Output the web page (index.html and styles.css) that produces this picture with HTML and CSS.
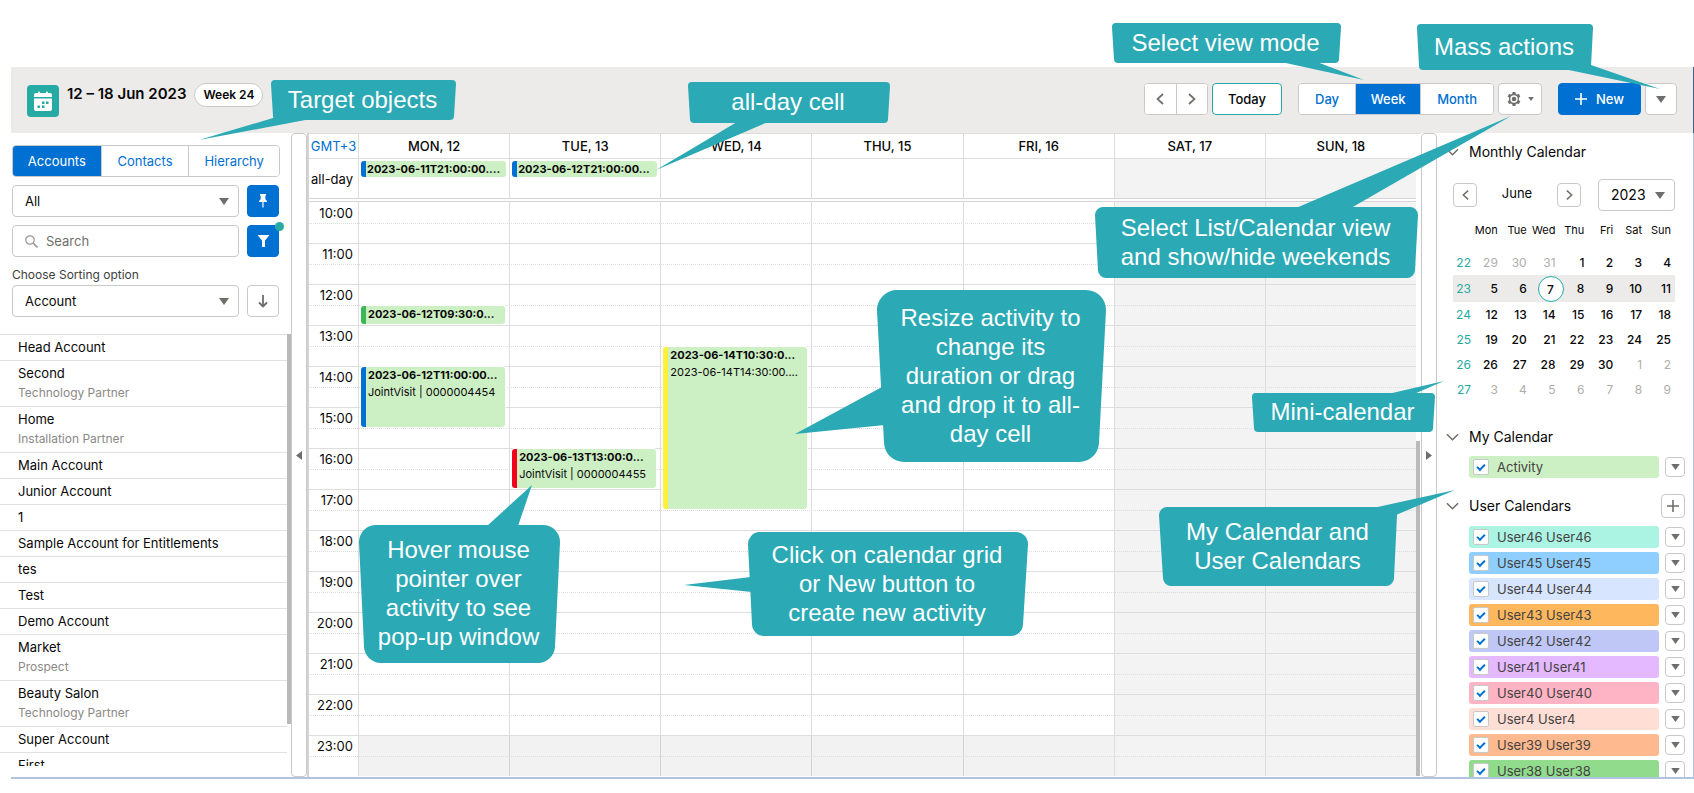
FILE: index.html
```html
<!DOCTYPE html>
<html lang="en">
<head>
<meta charset="utf-8">
<title>Week calendar</title>
<link rel="stylesheet" href="styles.css">
</head>
<body>
<svg class="sprite" aria-hidden="true">
  <symbol id="caret" viewBox="0 0 10 7"><path d="M0 0h10L5 7z"/></symbol>
  <symbol id="chev-left" viewBox="0 0 8 12"><path d="M7 1L1.500 6L7 11" fill="none" stroke="currentColor" stroke-width="1.700"/></symbol>
  <symbol id="chev-right" viewBox="0 0 8 12"><path d="M1 1L6.500 6L1 11" fill="none" stroke="currentColor" stroke-width="1.700"/></symbol>
  <symbol id="chev-down" viewBox="0 0 14 8"><path d="M1 1l6 6 6-6" fill="none" stroke="currentColor" stroke-width="1.600"/></symbol>
  <symbol id="plus" viewBox="0 0 12 12"><path d="M6 0v12M0 6h12" fill="none" stroke="currentColor" stroke-width="1.600"/></symbol>
</svg>
<div class="page">
  <header class="topbar">
    <svg class="app-icon" viewBox="0 0 32 32"><rect width="32" height="32" rx="4" fill="#26aba4"/><path fill="#fff" d="M9 8h2V7.500a1 1 0 0 1 2 0V8h6V7.500a1 1 0 0 1 2 0V8h2a2 2 0 0 1 2 2v2H7v-2a2 2 0 0 1 2-2zM7 13.500h18V24a2 2 0 0 1-2 2H9a2 2 0 0 1-2-2z"/><path fill="#26aba4" d="M15 16.500h2.500V19H15zM19 16.500h2.500V19H19zM10.500 20.500H13V23h-2.500zM15 20.500h2.500V23H15z"/></svg>
    <h1 class="range">12 – 18 Jun 2023</h1>
    <span class="pill">Week 24</span>
    <div class="tools">
      <div class="seg arrows">
        <button type="button" aria-label="Previous"><svg class="chev"><use href="#chev-left"/></svg></button>
        <button type="button" aria-label="Next"><svg class="chev"><use href="#chev-right"/></svg></button>
      </div>
      <button type="button" class="btn today">Today</button>
      <div class="seg views">
        <button type="button">Day</button>
        <button type="button" class="on">Week</button>
        <button type="button">Month</button>
      </div>
      <button type="button" class="btn gear" aria-label="Settings">
        <svg class="gear-icon" viewBox="0 0 14 14"><path fill="#706e6b" fill-rule="evenodd" d="M5.600 0h2.800l.4 1.900 1.200.7L11.900 2l1.400 2.400L11.900 5.700v2.600l1.400 1.300L11.900 12l-1.900-.6-1.200.7L8.400 14H5.600l-.4-1.900-1.200-.7L2.100 12 .7 9.600l1.400-1.300V5.700L.7 4.400 2.100 2l1.900.6 1.200-.7zM7 3.300a3.700 3.700 0 1 0 0 7.400 3.700 3.700 0 0 0 0-7.400zM7 4.700a2.300 2.300 0 1 1 0 4.600 2.300 2.300 0 0 1 0-4.600z"/></svg>
        <svg class="caret-small"><use href="#caret"/></svg>
      </button>
      <button type="button" class="btn new"><svg class="plus"><use href="#plus"/></svg>New</button>
      <button type="button" class="btn more" aria-label="Mass actions"><svg class="caret"><use href="#caret"/></svg></button>
    </div>
  </header>

  <main class="main">
    <aside class="side">
      <div class="filters">
        <div class="seg tabs">
          <button type="button" class="on">Accounts</button>
          <button type="button">Contacts</button>
          <button type="button">Hierarchy</button>
        </div>
        <div class="row">
          <div class="select"><select aria-label="List view"><option>All</option></select><svg class="caret"><use href="#caret"/></svg></div>
          <button type="button" class="sq blue" aria-label="Pin"><svg class="pin" viewBox="0 0 8 14"><path fill="#fff" d="M1 0h6v1.500l-.8.5.3 3.500L8 7v1H4.600v5L4 14l-.6-1V8H0V7l1.500-1.500L1.800 2 1 1.500z"/></svg></button>
        </div>
        <div class="row">
          <div class="search"><svg viewBox="0 0 13 13"><circle cx="5" cy="5" r="4.200" fill="none" stroke="#999" stroke-width="1.300"/><path d="M8 8l4.500 4.500" stroke="#999" stroke-width="1.600"/></svg><input type="text" placeholder="Search" aria-label="Search"></div>
          <button type="button" class="sq blue" aria-label="Filter"><svg class="funnel" viewBox="0 0 13 12"><path fill="#fff" d="M.5 0h12L8 5.500V12H5V5.500z"/></svg><i class="dot"></i></button>
        </div>
        <label class="sort-label" for="sort">Choose Sorting option</label>
        <div class="row sort-row">
          <div class="select"><select id="sort"><option>Account</option></select><svg class="caret"><use href="#caret"/></svg></div>
          <button type="button" class="sq" aria-label="Sort direction"><svg class="down" viewBox="0 0 10 13"><path d="M5 0v11.500M1 7.500l4 4 4-4" fill="none" stroke="#706e6b" stroke-width="1.800"/></svg></button>
        </div>
      </div>
      <ul class="accounts">
        <li>Head Account</li>
        <li>Second<small>Technology Partner</small></li>
        <li>Home<small>Installation Partner</small></li>
        <li>Main Account</li>
        <li>Junior Account</li>
        <li>1</li>
        <li>Sample Account for Entitlements</li>
        <li>tes</li>
        <li>Test</li>
        <li>Demo Account</li>
        <li>Market<small>Prospect</small></li>
        <li>Beauty Salon<small>Technology Partner</small></li>
        <li>Super Account</li>
        <li>First</li>
      </ul>
    </aside>

    <button type="button" class="gutter" aria-label="Collapse left panel"><svg viewBox="0 0 6 9"><path d="M6 0v9L0 4.500z" fill="#706e6b"/></svg></button>

    <section class="calendar">
      <div class="week head">
        <div class="gmt">GMT+3</div><div>MON, 12</div><div>TUE, 13</div><div>WED, 14</div><div>THU, 15</div><div>FRI, 16</div><div>SAT, 17</div><div>SUN, 18</div>
      </div>
      <div class="week allday">
        <div class="label">all-day</div>
        <div><div class="event blue-bar">2023-06-11T21:00:00....</div></div>
        <div><div class="event blue-bar">2023-06-12T21:00:00...</div></div>
        <div></div><div></div><div></div><div class="off"></div><div class="off"></div>
      </div>
      <div class="week hours">
        <div class="day mon"></div><div class="day tue"></div><div class="day wed"></div><div class="day thu"></div><div class="day fri"></div><div class="day sat off"></div><div class="day sun off"></div>
        <div class="hours-list">
          <div class="hour"><span>10:00</span></div><div class="hour"><span>11:00</span></div><div class="hour"><span>12:00</span></div><div class="hour"><span>13:00</span></div><div class="hour"><span>14:00</span></div><div class="hour"><span>15:00</span></div><div class="hour"><span>16:00</span></div><div class="hour"><span>17:00</span></div><div class="hour"><span>18:00</span></div><div class="hour"><span>19:00</span></div><div class="hour"><span>20:00</span></div><div class="hour"><span>21:00</span></div><div class="hour"><span>22:00</span></div><div class="hour closed"><span>23:00</span></div>
        </div>
        <div class="event green-bar mon at-1230"><b>2023-06-12T09:30:0...</b></div>
        <div class="event blue-bar mon at-1400"><b>2023-06-12T11:00:00...</b>JointVisit | 0000004454</div>
        <div class="event red-bar tue at-1600"><b>2023-06-13T13:00:0...</b>JointVisit | 0000004455</div>
        <div class="event yellow-bar wed at-1330"><b>2023-06-14T10:30:0...</b>2023-06-14T14:30:00....</div>
      </div>
      <i class="thumb"></i>
    </section>

    <button type="button" class="gutter" aria-label="Collapse right panel"><svg viewBox="0 0 6 9"><path d="M0 0v9l6-4.500z" fill="#706e6b"/></svg></button>

    <aside class="panel">
      <h2 class="sec"><svg><use href="#chev-down"/></svg>Monthly Calendar</h2>
      <div class="month-nav">
        <button type="button" class="mini" aria-label="Previous month"><svg class="chev"><use href="#chev-left"/></svg></button>
        <span class="month">June</span>
        <button type="button" class="mini" aria-label="Next month"><svg class="chev"><use href="#chev-right"/></svg></button>
        <div class="select year"><select aria-label="Year"><option>2023</option></select><svg class="caret"><use href="#caret"/></svg></div>
      </div>
      <table class="month-grid">
        <thead><tr><th></th><th>Mon</th><th>Tue</th><th>Wed</th><th>Thu</th><th>Fri</th><th>Sat</th><th>Sun</th></tr></thead>
        <tbody>
          <tr><th>22</th><td class="out">29</td><td class="out">30</td><td class="out">31</td><td>1</td><td>2</td><td>3</td><td>4</td></tr>
          <tr class="current"><th>23</th><td>5</td><td>6</td><td><span class="now">7</span></td><td>8</td><td>9</td><td>10</td><td>11</td></tr>
          <tr><th>24</th><td>12</td><td>13</td><td>14</td><td>15</td><td>16</td><td>17</td><td>18</td></tr>
          <tr><th>25</th><td>19</td><td>20</td><td>21</td><td>22</td><td>23</td><td>24</td><td>25</td></tr>
          <tr><th>26</th><td>26</td><td>27</td><td>28</td><td>29</td><td>30</td><td class="out">1</td><td class="out">2</td></tr>
          <tr><th>27</th><td class="out">3</td><td class="out">4</td><td class="out">5</td><td class="out">6</td><td class="out">7</td><td class="out">8</td><td class="out">9</td></tr>
        </tbody>
      </table>
      <h2 class="sec mine"><svg><use href="#chev-down"/></svg>My Calendar</h2>
      <div class="cals">
        <div class="cal"><label class="c-green"><input type="checkbox" checked>Activity</label><button type="button" class="drop" aria-label="Activity menu"><svg><use href="#caret"/></svg></button></div>
      </div>
      <div class="users-head">
        <h2 class="sec"><svg><use href="#chev-down"/></svg>User Calendars</h2>
        <button type="button" class="mini" aria-label="Add calendar"><svg class="plus"><use href="#plus"/></svg></button>
      </div>
      <div class="cals">
        <div class="cal"><label class="c46"><input type="checkbox" checked>User46 User46</label><button type="button" class="drop" aria-label="User46 menu"><svg><use href="#caret"/></svg></button></div>
        <div class="cal"><label class="c45"><input type="checkbox" checked>User45 User45</label><button type="button" class="drop" aria-label="User45 menu"><svg><use href="#caret"/></svg></button></div>
        <div class="cal"><label class="c44"><input type="checkbox" checked>User44 User44</label><button type="button" class="drop" aria-label="User44 menu"><svg><use href="#caret"/></svg></button></div>
        <div class="cal"><label class="c43"><input type="checkbox" checked>User43 User43</label><button type="button" class="drop" aria-label="User43 menu"><svg><use href="#caret"/></svg></button></div>
        <div class="cal"><label class="c42"><input type="checkbox" checked>User42 User42</label><button type="button" class="drop" aria-label="User42 menu"><svg><use href="#caret"/></svg></button></div>
        <div class="cal"><label class="c41"><input type="checkbox" checked>User41 User41</label><button type="button" class="drop" aria-label="User41 menu"><svg><use href="#caret"/></svg></button></div>
        <div class="cal"><label class="c40"><input type="checkbox" checked>User40 User40</label><button type="button" class="drop" aria-label="User40 menu"><svg><use href="#caret"/></svg></button></div>
        <div class="cal"><label class="c4"><input type="checkbox" checked>User4 User4</label><button type="button" class="drop" aria-label="User4 menu"><svg><use href="#caret"/></svg></button></div>
        <div class="cal"><label class="c39"><input type="checkbox" checked>User39 User39</label><button type="button" class="drop" aria-label="User39 menu"><svg><use href="#caret"/></svg></button></div>
        <div class="cal"><label class="c38"><input type="checkbox" checked>User38 User38</label><button type="button" class="drop" aria-label="User38 menu"><svg><use href="#caret"/></svg></button></div>
      </div>
    </aside>
  </main>
</div>

<div class="callout co-target"><svg><path class="body r4" d="M4 4H181L179 36H6z"/><path d="M2 38L-72 60L37 39.500z"/></svg><p>Target objects</p></div>
<div class="callout co-allday"><svg><path class="body r4" d="M4 4H198L196 37H6z"/><path d="M49 40L-32 88L80 40z"/></svg><p>all-day cell</p></div>
<div class="callout co-view"><svg><path class="body r4" d="M4 4H225L223 36H6z"/><path d="M169 39L252 57L205 39z"/></svg><p>Select view mode</p></div>
<div class="callout co-mass"><svg><path class="body r4" d="M4 4H172L170 42H6z"/><path d="M147 45L243 65L174 41z"/></svg><p>Mass actions</p></div>
<div class="callout co-list"><svg><path class="body r8" d="M8 8H315L312 63H11z"/><path d="M201 1L416 -91L256 1z"/></svg><p>Select List/Calendar view<br>and show/hide weekends</p></div>
<div class="callout co-resize"><svg><path class="body r20" d="M20 20H209L202 152H27z"/><path d="M5 97L-82 144L8 135z"/></svg><p>Resize activity to<br>change its<br>duration or drag<br>and drop it to all-<br>day cell</p></div>
<div class="callout co-mini"><svg><path class="body r4" d="M4 4H179L177 35H6z"/><path d="M136 1L192 -12L162 1z"/></svg><p>Mini-calendar</p></div>
<div class="callout co-hover"><svg><path class="body r17" d="M17 17H184L179 121H22z"/><path d="M128 1L173 -40L159 1z"/></svg><p>Hover mouse<br>pointer over<br>activity to see<br>pop-up window</p></div>
<div class="callout co-click"><svg><path class="body r12" d="M12 12H268L263 92H16z"/><path d="M3 45L-64 53L4 60z"/></svg><p>Click on calendar grid<br>or New button to<br>create new activity</p></div>
<div class="callout co-my"><svg><path class="body r8" d="M8 8H230L227 71H12z"/><path d="M214 1L296 -17L237 8z"/></svg><p>My Calendar and<br>User Calendars</p></div>
</body>
</html>
```
FILE: styles.css
```css
* { box-sizing: border-box; }
body {
  margin: 0;
  background: #fff;
  color: #080707;
  font: 13px/20px Inter, "Liberation Sans", sans-serif;
  position: relative;
  overflow: hidden;
}
button, input, select { font: inherit; color: inherit; margin: 0; }
button { background: #fff; border: 1px solid #c9c9c9; padding: 0; cursor: pointer; }
h1, h2, p, ul { margin: 0; padding: 0; }
svg { display: block; }
.sprite { position: absolute; width: 0; height: 0; }

.page { display: flex; flex-direction: column; height: 100vh; padding: 67px 0 14px 11px; }

/* top bar */
.topbar {
  display: flex;
  align-items: flex-start;
  height: 66px;
  flex: none;
  padding: 16px 16px 0;
  background: #ecebea;
  border-right: 1px solid #3b628f;
}
.app-icon { width: 32px; height: 32px; margin-top: 2px; }
.range { margin-left: 8px; font-size: 15px; line-height: 22px; font-weight: 600; white-space: nowrap; }
.pill {
  margin-left: 8px;
  padding: 0 8px;
  border: 1px solid #c9c9c9;
  border-radius: 12px;
  background: #fff;
  font-size: 12px;
  font-weight: 600;
  line-height: 22px;
}
.tools { display: flex; gap: 4px; margin-left: auto; height: 32px; }
.seg { display: flex; border: 1px solid #c9c9c9; border-radius: 4px; overflow: hidden; background: #fff; }
.seg button { border: 0; color: #0070d2; display: flex; align-items: center; justify-content: center; }
.seg button + button { border-left: 1px solid #c9c9c9; }
.seg button.on { background: #0070d2; color: #fff; }
.arrows { width: 64px; }
.arrows button { flex: 1; color: #706e6b; }
.chev { width: 8px; height: 12px; color: #706e6b; }
.btn { border-radius: 4px; display: flex; align-items: center; justify-content: center; }
.today { width: 70px; border-color: #26aba4; margin-right: 12px; font-weight: 500; }
.views { width: 196px; font-weight: 500; }
.views button:nth-child(1) { flex: 57; }
.views button:nth-child(2) { flex: 65; }
.views button:nth-child(3) { flex: 73; }
.gear { width: 44px; margin-right: 12px; gap: 7px; }
.gear-icon { width: 14px; height: 14px; }
.caret { width: 10px; height: 7px; fill: #706e6b; }
.caret-small { width: 6px; height: 4px; fill: #706e6b; }
.new { width: 83px; gap: 9px; background: #0070d2; border-color: #0070d2; color: #fff; font-weight: 500; }
.plus { width: 12px; height: 12px; color: #706e6b; }
.new .plus { color: #fff; }
.more { width: 32px; }

/* columns */
.main {
  flex: 1;
  min-height: 0;
  display: grid;
  grid-template-columns: 280px 16px minmax(0, 1fr) 16px 257px;
  grid-template-rows: minmax(0, 1fr);
  border-bottom: 2px solid #b0c3df;
}
.gutter {
  border-radius: 4px;
  display: flex;
  align-items: center;
  justify-content: center;
}
.gutter svg { width: 6px; height: 9px; }

/* left panel */
.side { display: flex; flex-direction: column; padding-bottom: 11px; }
.filters { padding: 12px 11px 17px 1px; display: flex; flex-direction: column; gap: 8px; }
.tabs { height: 32px; }
.tabs button:nth-child(1) { flex: 89; }
.tabs button:nth-child(2) { flex: 88; }
.tabs button:nth-child(3) { flex: 91; }
.row { display: flex; gap: 8px; height: 32px; padding-right: 1px; }
.select { position: relative; flex: 1; }
.select select {
  appearance: none;
  width: 100%;
  height: 100%;
  padding: 0 12px;
  border: 1px solid #c9c9c9;
  border-radius: 4px;
  background: #fff;
}
.select .caret { position: absolute; right: 10px; top: 13px; pointer-events: none; }
.sq { position: relative; flex: none; width: 32px; border-radius: 4px; display: flex; align-items: center; justify-content: center; }
.sq.blue { background: #0070d2; border-color: #0070d2; }
.pin { width: 8px; height: 14px; }
.funnel { width: 13px; height: 12px; }
.down { width: 10px; height: 13px; }
.dot { position: absolute; right: -6px; top: -4px; width: 9px; height: 9px; border-radius: 50%; background: #26aba4; }
.search { flex: 1; min-width: 0; display: flex; align-items: center; gap: 8px; border: 1px solid #c9c9c9; border-radius: 4px; padding-left: 12px; }
.search svg { width: 13px; height: 13px; flex: none; }
.search input { flex: 1; min-width: 0; border: 0; padding: 0; outline: 0; background: none; }
.search input::placeholder { color: #706e6b; opacity: 1; }
.sort-label { font-size: 12px; color: #3e3e3c; line-height: 20px; }
.sort-row { margin-top: -8px; }
.accounts {
  list-style: none;
  flex: 1;
  min-height: 0;
  overflow: hidden;
  margin: 0 0 0 -11px;
  border-right: 4px solid #bababa;
  border-image: linear-gradient(#bababa 90%, #fff 90%) 1;
  border-image-width: 0 4px 0 0;
}
.accounts li { border-top: 1px solid #e1e1e1; padding-left: 18px; line-height: 25px; }
.accounts small { display: block; font-size: 12px; line-height: 20px; margin-top: -3px; padding-bottom: 3px; color: #8b8987; }

/* week view */
.calendar { position: relative; border-left: 2px solid #d4d4d4; padding-right: 5px; overflow: hidden; display: flex; flex-direction: column; }
.week { display: grid; grid-template-columns: 49px repeat(7, minmax(0, 1fr)); }
.week > div { border-left: 1px solid #dddddd; }
.week > div:first-child { border-left: 0; }
.head { height: 26px; border-top: 1px solid #dddddd; border-bottom: 1px solid #dddddd; margin-right: -5px; padding-right: 5px; line-height: 24px; text-align: center; font-weight: 500; }
.head .gmt { color: #0070d2; font-weight: 400; }
.allday { height: 39px; }
.allday .label { padding-right: 5px; text-align: right; line-height: 40px; }
.off { background: #f3f3f3; }
.event {
  border-left: 5px solid;
  border-radius: 3px;
  background: #cdefc4;
  font-size: 11px;
  line-height: 17px;
  white-space: nowrap;
  overflow: hidden;
}
.event b { display: block; font-weight: 700; }
.allday .event { margin: 2px 3px 0 2px; height: 16px; line-height: 16px; padding-left: 1px; font-weight: 700; }
.hours { border-top: 4px double #d4d4d4; grid-template-rows: repeat(14, 21px 20px); }
.hours > div:first-child { border-left: 1px solid #dddddd; }
.hours .day { grid-row: 1 / -1; }
.hours .hours-list { grid-area: 1 / 1 / -1 / -1; border: 0; }
.hour { height: 41px; border-top: 1px solid #dddddd; position: relative; }
.hour:first-child { border-top-color: transparent; }
.hour::after { content: ""; position: absolute; left: 0; right: 0; top: 20px; border-top: 1px dotted #dddddd; }
.hour span { display: block; width: 49px; padding-right: 5px; text-align: right; line-height: 20px; height: 40px; }
.closed {
  background: linear-gradient(rgba(0, 0, 0, 0.050), rgba(0, 0, 0, 0.050)) no-repeat 50px 0 / calc((100% - 50px) * 5 / 7) 100%;
}
.mon { grid-column: 2; }
.tue { grid-column: 3; }
.wed { grid-column: 4; }
.thu { grid-column: 5; }
.fri { grid-column: 6; }
.sat { grid-column: 7; }
.sun { grid-column: 8; }
.hours > .event { position: relative; border-left: 5px solid; margin: 1px 4px 1px 3px; padding: 0 0 0 2px; box-shadow: 0 0 0 1px #fff; }
.week .blue-bar { border-color: #0070d2; }
.week .green-bar { border-color: #3bb755; }
.week .red-bar { border-color: #f2001c; }
.week .yellow-bar { border-color: #fff03a; }
.at-1230 { grid-row: 6; }
.at-1400 { grid-row: 9 / span 3; }
.at-1600 { grid-row: 13 / span 2; }
.at-1330 { grid-row: 8 / span 8; }
.thumb { position: absolute; right: 1px; top: 308px; bottom: 1px; width: 4px; background: #bababa; }

/* right panel */
.panel { border-right: 1px solid #b0c3df; overflow: hidden; padding: 9px 8px 0 9px; }
.sec { display: flex; align-items: center; gap: 10px; font-size: 14px; line-height: 20px; font-weight: 400; }
.sec svg { width: 13px; height: 8px; color: #706e6b; }
.month-nav { display: flex; align-items: center; padding: 0 10px 0 7px; margin-top: 17px; height: 32px; }
.mini { width: 24px; height: 24px; border-radius: 4px; display: flex; align-items: center; justify-content: center; }
.mini .chev { width: 7px; }
.month { flex: 1; text-align: center; padding-bottom: 4px; }
.year { flex: none; width: 77px; height: 32px; margin-left: 17px; font-size: 14px; }
.month-grid { border-collapse: collapse; table-layout: fixed; width: 222px; margin: 9px 0 0 7px; font-size: 12px; line-height: 20px; }
.month-grid th, .month-grid td { padding: 0 4px 0 0; height: 25px; text-align: right; font-weight: 500; }
.month-grid th:first-child { width: 20px; padding-right: 2px; color: #26aba4; font-weight: 400; }
.month-grid thead th { height: 30px; vertical-align: top; padding-right: 4px; font-size: 11px; font-weight: 400; overflow: visible; }
.month-grid .out { color: #b0adab; font-weight: 400; }
.month-grid .current { background: #ecebea; }
.month-grid .current th, .month-grid .current td { height: 27px; }
.now { display: block; width: 26px; height: 26px; margin-right: -8px; float: right; border: 1px solid #26aba4; border-radius: 50%; background: #fff; text-align: center; line-height: 25px; }
.mine { margin-top: 25px; }
.cals { padding: 0 0 0 23px; display: flex; flex-direction: column; gap: 4px; }
.mine + .cals { margin-top: 9px; }
.cal { display: flex; align-items: center; justify-content: space-between; }
.cal label { display: flex; align-items: center; gap: 8px; width: 190px; height: 22px; padding-left: 4px; border-radius: 3px; color: #444342; }
.cal input { appearance: none; width: 16px; height: 16px; border: 1px solid #c9c9c9; border-radius: 2px; background: #fff; position: relative; }
.cal input:checked::before { content: ""; box-sizing: border-box; position: absolute; left: 3px; top: 4px; width: 8px; height: 5px; border: solid #0070d2; border-width: 0 0 2px 2px; transform: rotate(-45deg); }
.drop { width: 20px; height: 20px; border-radius: 4px; display: flex; align-items: center; justify-content: center; }
.drop svg { width: 9px; height: 6px; fill: #706e6b; }
.users-head { display: flex; justify-content: space-between; align-items: center; margin: 16px 0 8px; }
.c-green { background: #cdefc4; }
.c46 { background: #abf3e3; }
.c45 { background: #8fcfff; }
.c44 { background: #d7e5ff; }
.c43 { background: #ffb75d; }
.c42 { background: #bec7f6; }
.c41 { background: #e4b9ff; }
.c40 { background: #ffb4c5; }
.c4 { background: #ffded5; }
.c39 { background: #ffb98f; }
.c38 { background: #90dc8c; }

/* callouts */
.callout { position: absolute; display: flex; align-items: center; justify-content: center; color: #fff; font: 24px/29px "Liberation Sans", Arial, sans-serif; text-align: center; white-space: nowrap; pointer-events: none; }
.callout svg { position: absolute; inset: 0; width: 100%; height: 100%; overflow: visible; fill: #2ba9b4; }
.callout p { position: relative; padding: 0 2px 2px 0; }
.body { stroke: #2ba9b4; stroke-linejoin: round; }
.r4 { stroke-width: 8px; }
.r8 { stroke-width: 16px; }
.r12 { stroke-width: 24px; }
.r17 { stroke-width: 34px; }
.r20 { stroke-width: 40px; }
.co-target { left: 271px; top: 80px; width: 185px; height: 40px; }
.co-allday { left: 688px; top: 82px; width: 202px; height: 41px; }
.co-view { right: 353px; top: 23px; width: 229px; height: 40px; }
.co-mass { right: 101px; top: 24px; width: 176px; height: 46px; }
.co-list { right: 276px; top: 207px; width: 323px; height: 71px; }
.co-resize { left: 877px; top: 290px; width: 229px; height: 172px; }
.co-mini { right: 259px; top: 393px; width: 183px; height: 39px; }
.co-hover { left: 359px; top: 525px; width: 201px; height: 138px; }
.co-click { left: 748px; top: 532px; width: 280px; height: 104px; }
.co-my { right: 296px; top: 507px; width: 239px; height: 79px; }
```
